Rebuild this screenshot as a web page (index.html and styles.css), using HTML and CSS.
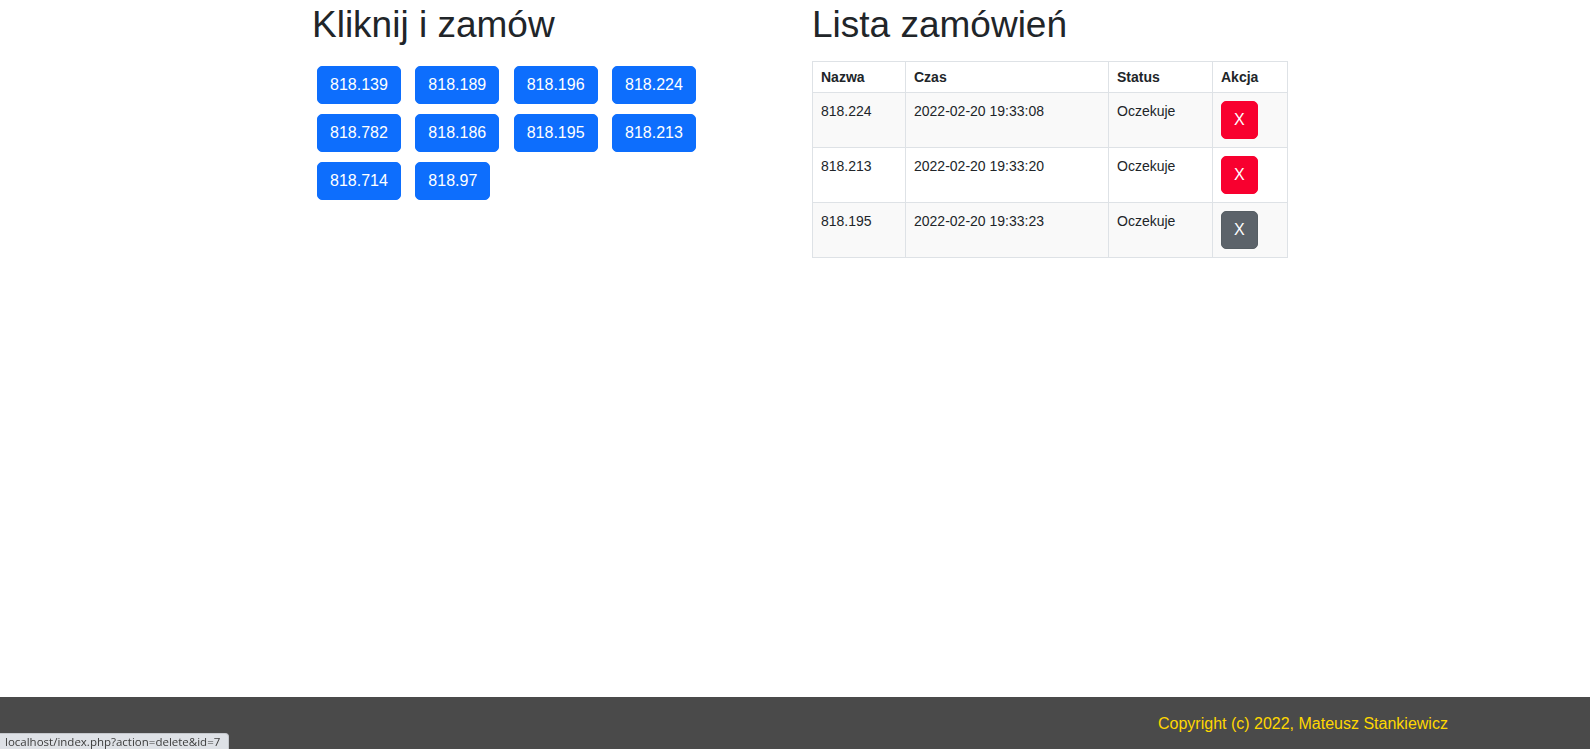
FILE: index.html
```html
<!DOCTYPE html>
<html lang="pl">
<head>
<meta charset="utf-8">
<title>Zamówienia</title>
<link rel="stylesheet" href="styles.css">
</head>
<body>
<div class="page">
  <main class="container">
    <section class="col">
      <h1 class="title">Kliknij i zamów</h1>
      <div class="btn-grid">
        <a class="btn btn-primary" href="#">818.139</a>
        <a class="btn btn-primary" href="#">818.189</a>
        <a class="btn btn-primary" href="#">818.196</a>
        <a class="btn btn-primary" href="#">818.224</a>
        <a class="btn btn-primary" href="#">818.782</a>
        <a class="btn btn-primary" href="#">818.186</a>
        <a class="btn btn-primary" href="#">818.195</a>
        <a class="btn btn-primary" href="#">818.213</a>
        <a class="btn btn-primary" href="#">818.714</a>
        <a class="btn btn-primary" href="#">818.97</a>
      </div>
    </section>
    <section class="col">
      <h1 class="title">Lista zamówień</h1>
      <table class="orders">
        <colgroup>
          <col class="c-name">
          <col class="c-time">
          <col class="c-status">
          <col class="c-action">
        </colgroup>
        <thead>
          <tr><th>Nazwa</th><th>Czas</th><th>Status</th><th>Akcja</th></tr>
        </thead>
        <tbody>
          <tr class="striped"><td>818.224</td><td>2022-02-20 19:33:08</td><td>Oczekuje</td><td><a class="btn btn-danger" href="#">X</a></td></tr>
          <tr><td>818.213</td><td>2022-02-20 19:33:20</td><td>Oczekuje</td><td><a class="btn btn-danger" href="#">X</a></td></tr>
          <tr class="striped"><td>818.195</td><td>2022-02-20 19:33:23</td><td>Oczekuje</td><td><a class="btn btn-secondary" href="#">X</a></td></tr>
        </tbody>
      </table>
    </section>
  </main>
  <footer class="footer">
    <p class="copyright">Copyright (c) 2022, Mateusz Stankiewicz</p>
  </footer>
</div>
<div class="statusbar">localhost/index.php?action=delete&amp;id=7</div>
</body>
</html>
```
FILE: styles.css
```css
html, body {
  margin: 0;
  padding: 0;
}
body {
  font-family: "Liberation Sans", Arial, sans-serif;
  font-size: 16px;
  line-height: 1.5;
  color: #212529;
  background: #fff;
}
.page {
  height: 100vh;
  display: flex;
  flex-direction: column;
}
.container {
  flex: 1;
  display: flex;
  width: 1000px;
  margin-left: 300px;
}
.col {
  width: 500px;
  padding: 0 12px;
  box-sizing: border-box;
}
.title {
  font-size: 37px;
  font-weight: 400;
  line-height: 1.2;
  margin: 3px 0 14px;
}
.btn-grid {
  display: flex;
  flex-wrap: wrap;
  column-gap: 14.5px;
  row-gap: 10px;
  padding: 5px;
}
.btn {
  display: inline-block;
  font-size: 16px;
  line-height: 24px;
  padding: 6px 12px;
  border: 1px solid transparent;
  border-radius: 5px;
  color: #fff;
  text-decoration: none;
}
.btn-primary {
  background: #0d6efd;
  border-color: #0d6efd;
}
.btn-danger {
  background: #f8002f;
  border-color: #f8002f;
}
.btn-secondary {
  background: #5c636a;
  border-color: #565e64;
}
.orders {
  width: 475px;
  table-layout: fixed;
  border-collapse: collapse;
  font-size: 14px;
}
.c-name { width: 93px; }
.c-time { width: 203px; }
.c-status { width: 104px; }
.c-action { width: 75px; }
.orders th, .orders td {
  border: 1px solid #dee2e6;
  padding: 8px;
  text-align: left;
  vertical-align: top;
}
.orders th {
  font-weight: 700;
  line-height: 14px;
}
.orders td {
  line-height: 20px;
}
.orders tr.striped td {
  background: #f9f9f9;
}
.footer {
  height: 52px;
  background: #4a4a4a;
  box-sizing: border-box;
  padding-top: 15px;
}
.copyright {
  margin: 0 0 0 1158px;
  color: #ffd700;
  font-size: 16px;
  line-height: 24px;
}
.statusbar {
  position: fixed;
  left: 0;
  bottom: 0;
  height: 15px;
  padding: 0 8px 0 5px;
  background: #dee1e6;
  border-top: 1px solid #c4c7cc;
  border-right: 1px solid #c4c7cc;
  border-top-right-radius: 4px;
  font-family: "Open Sans", "Noto Sans", sans-serif;
  font-size: 11.5px;
  line-height: 15px;
  color: #3c3c3c;
  white-space: nowrap;
}
```
